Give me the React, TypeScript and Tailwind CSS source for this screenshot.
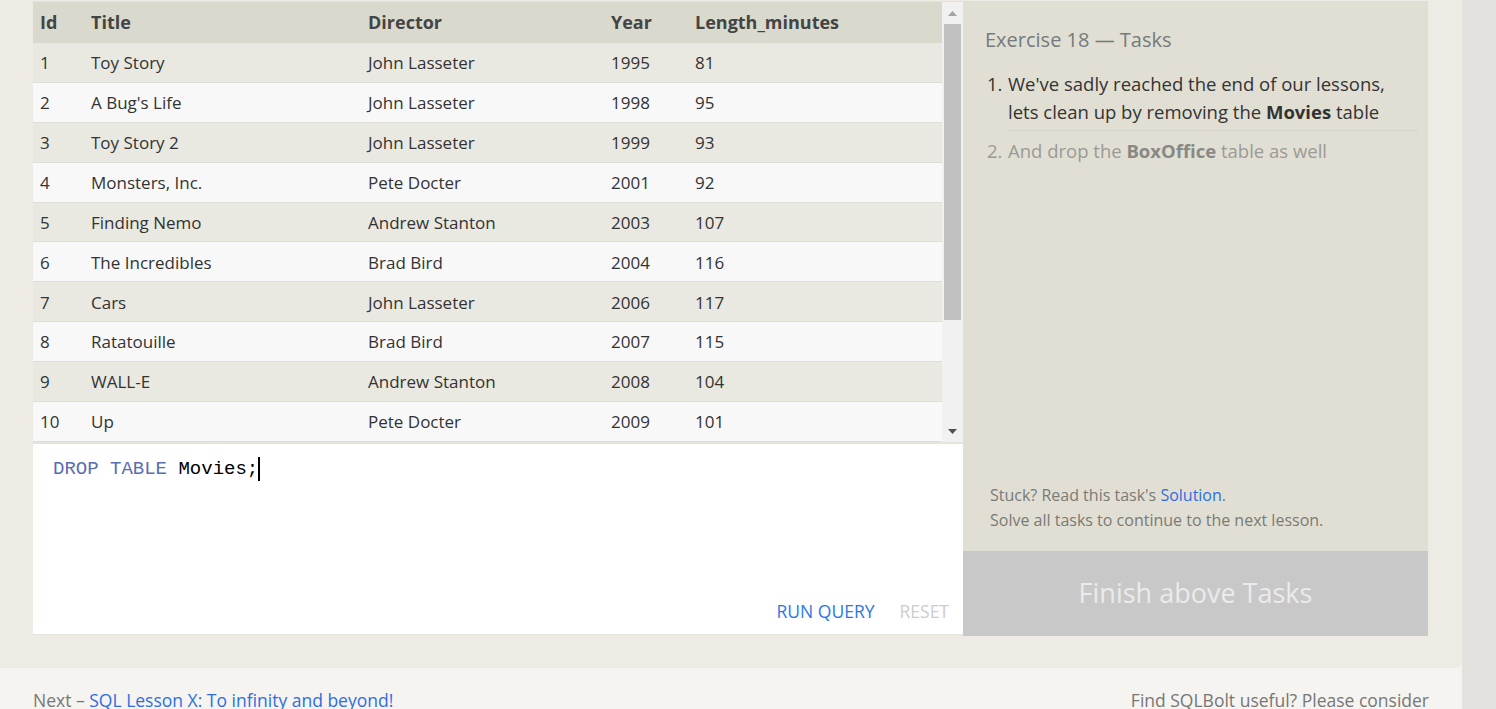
import React from 'react';

const movies = [
  { id: 1, title: 'Toy Story', director: 'John Lasseter', year: 1995, length: 81 },
  { id: 2, title: "A Bug's Life", director: 'John Lasseter', year: 1998, length: 95 },
  { id: 3, title: 'Toy Story 2', director: 'John Lasseter', year: 1999, length: 93 },
  { id: 4, title: 'Monsters, Inc.', director: 'Pete Docter', year: 2001, length: 92 },
  { id: 5, title: 'Finding Nemo', director: 'Andrew Stanton', year: 2003, length: 107 },
  { id: 6, title: 'The Incredibles', director: 'Brad Bird', year: 2004, length: 116 },
  { id: 7, title: 'Cars', director: 'John Lasseter', year: 2006, length: 117 },
  { id: 8, title: 'Ratatouille', director: 'Brad Bird', year: 2007, length: 115 },
  { id: 9, title: 'WALL-E', director: 'Andrew Stanton', year: 2008, length: 104 },
  { id: 10, title: 'Up', director: 'Pete Docter', year: 2009, length: 101 },
];

const font = "font-['Open_Sans','Noto_Sans',sans-serif]";

const App: React.FC = () => {
  return (
    <div className={`${font} w-[1496px] h-[709px] overflow-hidden flex bg-[#e5e1de]`}>
      <div className="w-[1462px] flex flex-col bg-[#f5f4f0]">
        {/* Exercise area */}
        <div className="h-[668px] shrink-0 bg-[#eeebe4] rounded-br-md px-[33px] pt-[1px] flex">
          {/* Left: results + editor */}
          <div className="w-[930px] flex flex-col h-[634px]">
            <div className="flex h-[441px] border-t border-[#e2e1da]">
              <div className="flex-1 flex flex-col">
                <div className="flex h-[41px] items-center bg-[#d9d9cd] text-[#444] font-bold text-[18px]">
                  <div className="w-[51px] pl-[7px]">Id</div>
                  <div className="w-[277px] pl-[7px]">Title</div>
                  <div className="w-[243px] pl-[7px]">Director</div>
                  <div className="w-[84px] pl-[7px]">Year</div>
                  <div className="flex-1 pl-[7px]">Length_minutes</div>
                </div>
                {movies.map((m, i) => (
                  <div
                    key={m.id}
                    className={`flex h-[40px] items-center pt-[1px] text-[17px] text-[#333] border-b border-[#dededa] ${
                      i % 2 === 0 ? 'bg-[#e9e8e1]' : 'bg-[#f8f8f8]'
                    }`}
                  >
                    <div className="w-[51px] pl-[7px]">{m.id}</div>
                    <div className="w-[277px] pl-[7px]">{m.title}</div>
                    <div className="w-[243px] pl-[7px]">{m.director}</div>
                    <div className="w-[84px] pl-[7px]">{m.year}</div>
                    <div className="flex-1 pl-[7px]">{m.length}</div>
                  </div>
                ))}
              </div>
              {/* scrollbar */}
              <div className="w-[21px] bg-[#f1f1f1] flex flex-col items-center">
                <svg width="9" height="6" viewBox="0 0 9 6" className="mt-[8px]">
                  <path d="M0 6 L4.5 1 L9 6 Z" fill="#a3a3a3" />
                </svg>
                <div className="w-[17px] h-[296px] bg-[#c1c1c1] mt-[8px]" />
                <div className="flex-1" />
                <svg width="9" height="6" viewBox="0 0 9 6" className="mb-[7px]">
                  <path d="M0 0 L9 0 L4.5 5 Z" fill="#505050" />
                </svg>
              </div>
            </div>
            <div className="flex-1 bg-white border-t-2 border-[#e5e4dd] border-b border-[#e3e2db] flex flex-col">
              <div className="font-['Liberation_Mono',monospace] text-[19px] pl-[20px] pt-[11px] flex items-center">
                <span className="text-[#5a6db3]">DROP TABLE</span>
                <span className="text-black">&nbsp;Movies;</span>
                <span className="inline-block w-[2px] h-[24px] bg-black" />
              </div>
              <div className="flex-1" />
              <div className="flex justify-end gap-[25px] pr-[14px] pb-[10px] text-[17.5px]">
                <span className="text-[#2a78e4]">RUN QUERY</span>
                <span className="text-[#cccccc]">RESET</span>
              </div>
            </div>
          </div>

          {/* Right: tasks */}
          <div className="w-[465px] h-[635px] bg-[#e1dfd3] flex flex-col">
            <div className="flex-1 pl-[22px] pr-[10px] pt-[24px] flex flex-col">
              <div className="text-[20px] text-[#737a80]">Exercise 18 — Tasks</div>
              <ol className="mt-[15px] text-[18.5px] leading-[28px]">
                <li className="flex text-[#333] pb-[6px]">
                  <span className="w-[23px] pl-[2px] shrink-0">1.</span>
                  <span className="border-b border-[#d6d4c8] pb-[4px] flex-1 pr-[12px]">
                    We've sadly reached the end of our lessons, lets clean up by removing the{' '}
                    <b className="text-[#333]">Movies</b> table
                  </span>
                </li>
                <li className="flex text-[#9a9a96]">
                  <span className="w-[23px] pl-[2px] shrink-0">2.</span>
                  <span>
                    And drop the <b className="text-[#888884]">BoxOffice</b> table as well
                  </span>
                </li>
              </ol>
              <div className="flex-1" />
              <div className="text-[16px] leading-[25px] text-[#7a7a76] pl-[5px] pb-[18px]">
                <div>
                  Stuck? Read this task's <span className="text-[#2e6ee0]">Solution</span>.
                </div>
                <div>Solve all tasks to continue to the next lesson.</div>
              </div>
            </div>
            <div className="h-[85px] bg-[#c8c8c8] flex items-center justify-center text-[27px] text-[#ebebeb]">
              Finish above Tasks
            </div>
          </div>
        </div>

        {/* Footer */}
        <div className="flex justify-between px-[33px] pt-[19px] text-[17.5px] text-[#777]">
          <div>
            Next – <span className="text-[#2e6ee0]">SQL Lesson X: To infinity and beyond!</span>
          </div>
          <div>Find SQLBolt useful? Please consider</div>
        </div>
      </div>
      <div className="flex-1 bg-[#e5e1de]" />
    </div>
  );
};

export default App;
